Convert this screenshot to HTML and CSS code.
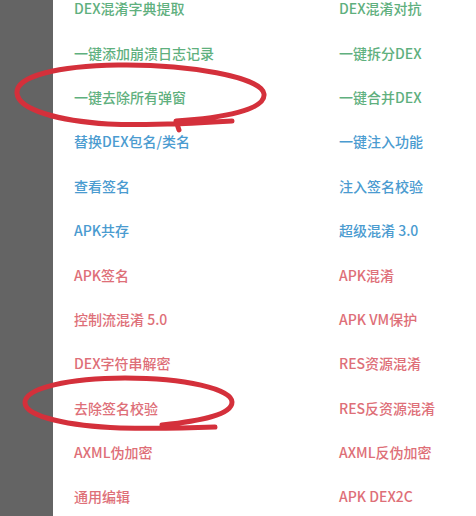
FILE: index.html
```html
<!DOCTYPE html>
<html lang="zh">
<head>
<meta charset="utf-8">
<link rel="stylesheet" href="styles.css">
</head>
<body>
<div class="page">
  <div class="sidebar"></div>
  <div class="main">
    <div class="menu">
      <div class="item green">DEX混淆字典提取</div>
      <div class="item green">DEX混淆对抗</div>
      <div class="item green">一键添加崩溃日志记录</div>
      <div class="item green">一键拆分DEX</div>
      <div class="item green">一键去除所有弹窗</div>
      <div class="item green">一键合并DEX</div>
      <div class="item blue">替换DEX包名/类名</div>
      <div class="item blue">一键注入功能</div>
      <div class="item blue">查看签名</div>
      <div class="item blue">注入签名校验</div>
      <div class="item blue">APK共存</div>
      <div class="item blue">超级混淆 3.0</div>
      <div class="item red">APK签名</div>
      <div class="item red">APK混淆</div>
      <div class="item red">控制流混淆 5.0</div>
      <div class="item red">APK VM保护</div>
      <div class="item red">DEX字符串解密</div>
      <div class="item red">RES资源混淆</div>
      <div class="item red">去除签名校验</div>
      <div class="item red">RES反资源混淆</div>
      <div class="item red">AXML伪加密</div>
      <div class="item red">AXML反伪加密</div>
      <div class="item red">通用编辑</div>
      <div class="item red">APK DEX2C</div>
    </div>
  </div>
  <svg class="marks" width="476" height="516" viewBox="0 0 476 516">
    <path d="M232 121 C200 123 150 126 108 124 C60 121 18 110 17 93 C16 76 58 66 118 65 C188 64 262 77 264 94 C266 110 222 118 176 121 L179 130"/>
    <path d="M215 427 C190 428 160 429 120 428 C70 426 26 417 25 403 C24 388 70 378 125 378 C185 378 232 389 232 402 C232 415 200 421 162 425"/>
  </svg>
</div>
</body>
</html>
```
FILE: styles.css
```css
html, body {
  margin: 0;
  padding: 0;
  background: #ffffff;
}
.page {
  position: relative;
  width: 476px;
  height: 516px;
  overflow: hidden;
  display: flex;
}
.sidebar {
  width: 53px;
  flex: none;
  background: #646464;
}
.main {
  flex: 1;
  padding-left: 21px;
}
.menu {
  margin-top: -13.6px;
  display: grid;
  grid-template-columns: 265px 1fr;
  grid-auto-rows: 44.36px;
}
.item {
  font-family: "Noto Sans CJK SC", "Noto Sans", sans-serif;
  font-size: 14px;
  font-weight: 500;
  line-height: 44.36px;
  white-space: nowrap;
}
.green { color: #5fb07e; }
.blue { color: #4a9bd0; }
.red { color: #de6f78; }
.marks {
  position: absolute;
  left: 0;
  top: 0;
  pointer-events: none;
}
.marks path {
  fill: none;
  stroke: #d4303b;
  stroke-width: 5;
  stroke-linecap: round;
  stroke-linejoin: round;
}
```
